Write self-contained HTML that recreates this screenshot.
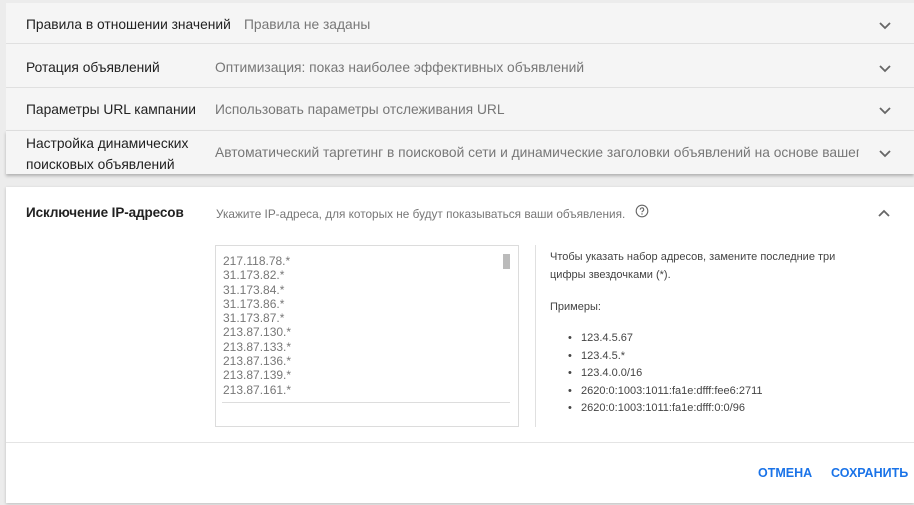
<!DOCTYPE html>
<html><head><meta charset="utf-8"><style>
*{margin:0;padding:0;box-sizing:border-box}
body{width:914px;height:505px;background:#ececec;font-family:"Liberation Sans",sans-serif;position:relative;overflow:hidden;color:#202124}
.a{position:absolute}
.row{position:absolute;left:6px;right:0;background:#f5f5f5;border-bottom:1px solid #e0e0e0}
.lab{position:absolute;left:20px;font-size:13.8px;color:#212121}
.val{position:absolute;font-size:13.8px;color:#777;white-space:nowrap}
.chev{position:absolute;left:872px;width:14px;height:10px}
.ip{font-size:12px;color:#777;line-height:14.3px}
.r{font-size:11px;color:#444}
</style></head><body>
<div class="row" style="top:3px;height:41px"><div class="lab" style="top:14px">Правила в отношении значений</div><div class="val" style="left:238px;top:14px">Правила не заданы</div>
<svg class="chev" style="top:18px" viewBox="0 0 14 10"><path d="M2 2l5 5 5-5" stroke="#666" stroke-width="1.8" fill="none"/></svg></div>
<div class="row" style="top:44px;height:44px"><div class="lab" style="top:16px">Ротация объявлений</div><div class="val" style="left:209px;top:16px">Оптимизация: показ наиболее эффективных объявлений</div>
<svg class="chev" style="top:20px" viewBox="0 0 14 10"><path d="M2 2l5 5 5-5" stroke="#666" stroke-width="1.8" fill="none"/></svg></div>
<div class="row" style="top:88px;height:43px"><div class="lab" style="top:14px">Параметры URL кампании</div><div class="val" style="left:209px;top:14px">Использовать параметры отслеживания URL</div>
<svg class="chev" style="top:18px" viewBox="0 0 14 10"><path d="M2 2l5 5 5-5" stroke="#666" stroke-width="1.8" fill="none"/></svg></div>
<div class="row" style="top:131px;height:43px;box-shadow:0 2px 3px rgba(0,0,0,.25);border-bottom:none"><div class="lab" style="top:2px;line-height:21px">Настройка динамических<br>поисковых объявлений</div><div class="val" style="left:209px;top:14px;width:644px;overflow:hidden">Автоматический таргетинг в поисковой сети и динамические заголовки объявлений на основе вашего сайта</div>
<svg class="chev" style="top:18px" viewBox="0 0 14 10"><path d="M2 2l5 5 5-5" stroke="#666" stroke-width="1.8" fill="none"/></svg></div>

<div class="a" style="left:6px;top:187px;width:908px;height:316px;background:#fff;box-shadow:0 1px 3px rgba(0,0,0,.2)">
<div class="a" style="left:20px;top:18px;font-size:13.5px;font-weight:bold;color:#212121;letter-spacing:-.1px">Исключение IP-адресов</div>
<div class="a" style="left:210px;top:20px;font-size:11.8px;color:#777">Укажите IP-адреса, для которых не будут показываться ваши объявления.</div>
<svg class="a" style="left:629px;top:17px" width="14" height="14" viewBox="0 0 14 14"><circle cx="7" cy="7" r="5.8" stroke="#666" fill="none" stroke-width="1.1"/><path d="M5.3 5.6a1.7 1.7 0 1 1 2.4 1.5c-.6.3-.7.6-.7 1.2" stroke="#666" fill="none" stroke-width="1.1"/><circle cx="7" cy="10" r=".7" fill="#666"/></svg>
<svg class="a" style="left:871px;top:21px" width="14" height="10" viewBox="0 0 14 10"><path d="M2 8l5-5 5 5" stroke="#666" stroke-width="1.8" fill="none"/></svg>
<div class="a" style="left:209px;top:58px;width:304px;height:182px;border:1px solid #dcdcdc">
<div class="a ip" style="left:7px;top:8px">217.118.78.*<br>31.173.82.*<br>31.173.84.*<br>31.173.86.*<br>31.173.87.*<br>213.87.130.*<br>213.87.133.*<br>213.87.136.*<br>213.87.139.*<br>213.87.161.*</div>
<div class="a" style="left:287px;top:8px;width:7px;height:15px;background:#bbb"></div>
<div class="a" style="left:6px;top:156px;width:288px;height:1px;background:#ddd"></div>
</div>
<div class="a" style="left:529px;top:58px;width:1px;height:182px;background:#e0e0e0"></div>
<div class="a r" style="left:544px;top:61px;line-height:18px">Чтобы указать набор адресов, замените последние три<br>цифры звездочками (*).</div>
<div class="a r" style="left:544px;top:114px">Примеры:</div>
<div class="a r" style="left:562px;top:143px;line-height:17.6px">
<div>•&nbsp;&nbsp;&nbsp;123.4.5.67</div><div>•&nbsp;&nbsp;&nbsp;123.4.5.*</div><div>•&nbsp;&nbsp;&nbsp;123.4.0.0/16</div><div>•&nbsp;&nbsp;&nbsp;2620:0:1003:1011:fa1e:dfff:fee6:2711</div><div>•&nbsp;&nbsp;&nbsp;2620:0:1003:1011:fa1e:dfff:0:0/96</div></div>
<div class="a" style="left:0;top:255px;width:908px;height:1px;background:#e4e4e4"></div>
<div class="a" style="left:752px;top:279px;font-size:12.5px;color:#1a73e8;font-weight:bold">ОТМЕНА</div>
<div class="a" style="left:825px;top:279px;font-size:12.5px;color:#1a73e8;font-weight:bold">СОХРАНИТЬ</div>
</div>
</body></html>
